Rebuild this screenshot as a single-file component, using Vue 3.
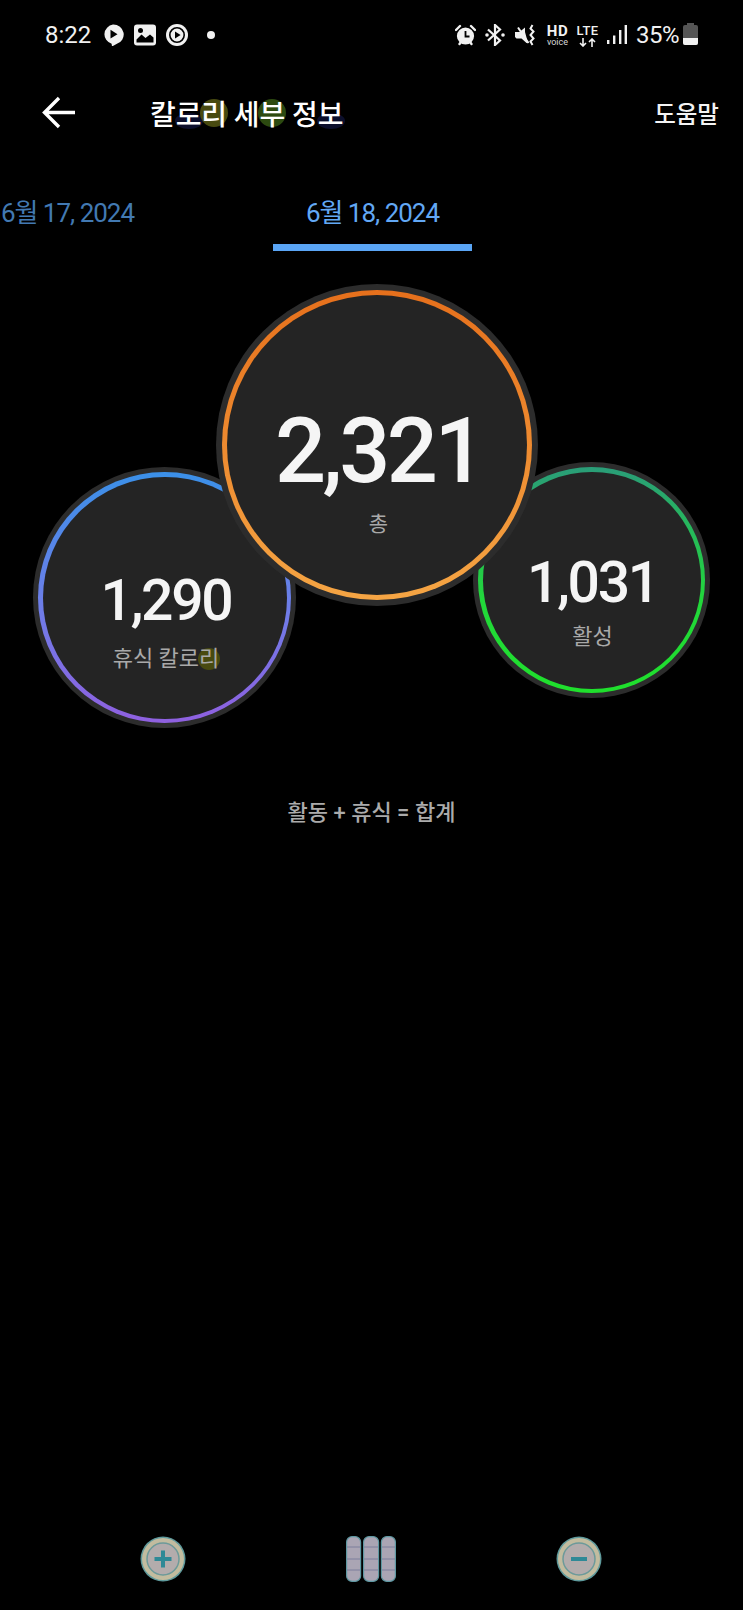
<script setup>
const bubbles = [
  { key: 'left', value: '1,290', label: '휴식 칼로', mark: '리' },
  { key: 'right', value: '1,031', label: '활성', mark: '' },
  { key: 'center', value: '2,321', label: '총', mark: '' }
]
</script>

<template>
  <div class="page">
    <div class="status">
      <span class="time">8:22</span>
      <svg class="ic" viewBox="0 0 22 22"><path d="M11 0.500a10.500 10 0 0 1 3.500 19.500L10 22.500l-.4-2.700A10.500 10 0 0 1 11 .5z" fill="#f1f1f1"/><path d="M8.500 5.800l7 4.400-7 4.400z" fill="#000"/></svg>
      <svg class="ic ic-pic" viewBox="0 0 22 22"><rect x="0" y="0.500" width="22" height="21" rx="3" fill="#f1f1f1"/><circle cx="6.500" cy="6.500" r="2.500" fill="#000"/><path d="M2.500 18.500v-3l5-5 4 3.500 4.500-3.500 3.500 3v5z" fill="#000"/></svg>
      <svg class="ic ic-rec" viewBox="0 0 22 22"><circle cx="11" cy="11" r="11" fill="#f1f1f1"/><circle cx="11" cy="11" r="7.200" fill="none" stroke="#000" stroke-width="1.600"/><path d="M9 7.500l5.600 3.500L9 14.500z" fill="#000"/></svg>
      <span class="dot"></span>
      <span class="status-gap"></span>
      <svg class="ic ic-alarm" viewBox="0 0 21 22"><circle cx="10.500" cy="12" r="8.600" fill="#f1f1f1"/><path d="M1 6l4-4M20 6l-4-4M4.500 20l1.500-2M16.500 20l-1.500-2" stroke="#f1f1f1" stroke-width="2.400" stroke-linecap="round"/><path d="M10.500 7v5.500h4" fill="none" stroke="#000" stroke-width="1.800"/></svg>
      <svg class="ic ic-bt" viewBox="0 0 20 22"><path d="M3 5.500l12 11L10 21V1l5 4.500L3 16.500" fill="none" stroke="#f1f1f1" stroke-width="2.200"/><circle cx="2" cy="11" r="1.800" fill="#f1f1f1"/><circle cx="18" cy="11" r="1.800" fill="#f1f1f1"/></svg>
      <svg class="ic ic-mute" viewBox="0 0 21 22"><path d="M0 8h4.500L10 3.500V8L13 19h-1.500L6.500 14.500H1.500L0 13z" fill="#f1f1f1"/><path d="M3 3.500l10.500 15.500" stroke="#f1f1f1" stroke-width="2"/><path d="M17.500 1l-2 3.500 3 3-3 3.500 3 3.500-3 3 2 3.500" fill="none" stroke="#f1f1f1" stroke-width="2"/></svg>
      <span class="hd"><b>HD</b><i>voice</i></span>
      <span class="lte"><b>LTE</b><svg viewBox="0 0 20 9" width="20" height="9"><path d="M5 0v8M2 5l3 3 3-3M14 9V1M11 4l3-3 3 3" fill="none" stroke="#f1f1f1" stroke-width="1.600"/></svg></span>
      <svg class="ic ic-sig" viewBox="0 0 20 22"><rect x="0" y="16" width="2.400" height="4" fill="#f1f1f1"/><rect x="6" y="11.500" width="2.400" height="8.500" fill="#f1f1f1"/><rect x="12" y="6" width="2.400" height="14" fill="#f1f1f1"/><rect x="17.600" y="1" width="2.400" height="19" fill="#f1f1f1"/></svg>
      <span class="pct">35%</span>
      <span class="batt"><span class="batt-fill"></span></span>
    </div>

    <header class="bar">
      <svg class="back" viewBox="0 0 34 34" width="34" height="34"><path d="M33 16.500H3M17 2L2.500 16.500 17 31" fill="none" stroke="#fff" stroke-width="3.400"/></svg>
      <h1 class="title">칼<span class="glow navy">로</span><span class="glow olive">리</span> 세<span class="glow green">부</span> 정<span class="glow navy">보</span></h1>
      <span class="help">도움말</span>
    </header>

    <nav class="tabs">
      <div class="tab">6월 17, 2024</div>
      <div class="tab active">6월 18, 2024</div>
    </nav>

    <section class="stage">
      <div v-for="b in bubbles" :key="b.key" class="bubble" :class="b.key">
        <div class="ring">
          <div class="face">
            <div class="num">{{ b.value }}</div>
            <div class="lab">{{ b.label }}<span v-if="b.mark" class="glow olive">{{ b.mark }}</span></div>
          </div>
        </div>
      </div>
    </section>

    <p class="formula">활동 + 휴식 = 합계</p>

    <footer class="tools">
      <svg class="tool" viewBox="0 0 46 46" width="46" height="46"><circle cx="23" cy="23" r="22.500" fill="#5f9a9c"/><circle cx="23" cy="23" r="21" fill="#c2bc9f"/><circle cx="23" cy="23" r="16" fill="#b3acac" stroke="#6c9a9a" stroke-width="1.500"/><path d="M23 14.500v17M14.500 23h17" stroke="#2f8996" stroke-width="4"/></svg>
      <svg class="tool" viewBox="0 0 50 46" width="50" height="46"><g fill="#aaa5b4" stroke="#5e98a2" stroke-width="1.200"><rect x="0.600" y="0.600" width="14" height="44.800" rx="5.500"/><rect x="17.600" y="0.600" width="15" height="44.800" rx="5.500"/><rect x="35.400" y="0.600" width="14" height="44.800" rx="5.500"/></g><path d="M1 11h13M18 11h14M36 11h13M1 23h13M18 23h14M36 23h13M1 34h13M18 34h14M36 34h13" stroke="#7d7f9c" stroke-width="1"/></svg>
      <svg class="tool" viewBox="0 0 46 46" width="46" height="46"><circle cx="23" cy="23" r="22.500" fill="#5f9a9c"/><circle cx="23" cy="23" r="21" fill="#c2bc9f"/><circle cx="23" cy="23" r="16" fill="#b3acac" stroke="#6c9a9a" stroke-width="1.500"/><path d="M15 23h16" stroke="#2f8996" stroke-width="4"/></svg>
    </footer>
  </div>
</template>

<style>
html, body { margin: 0; background: #000; }
</style>

<style scoped>
.page {
  width: 743px;
  height: 1610px;
  background: #000;
  display: flex;
  flex-direction: column;
  overflow: hidden;
  color: #f1f1f1;
  font-family: Roboto, "Noto Sans CJK KR", sans-serif;
}

.status {
  height: 70px;
  flex: none;
  display: flex;
  align-items: center;
  padding: 0 45px;
  box-sizing: border-box;
}
.time { font-size: 24px; width: 46px; margin-right: 11px; }
.ic { width: 22px; height: 22px; flex: none; }
.ic-pic, .ic-rec { margin-left: 10px; }
.dot { width: 8px; height: 8px; border-radius: 50%; background: #f1f1f1; margin-left: 19px; }
.status-gap { flex: 1; }
.ic-alarm { width: 21px; }
.ic-bt { width: 20px; margin-left: 9px; }
.ic-mute { width: 21px; margin-left: 10px; }
.hd { display: flex; flex-direction: column; align-items: center; margin-left: 10px; width: 23px; line-height: 1; }
.hd b { font-size: 15px; font-weight: 700; letter-spacing: 0.5px; line-height: 14px; }
.hd i { font-style: normal; font-size: 9px; line-height: 9px; color: #d8d8d8; }
.lte { display: flex; flex-direction: column; align-items: center; margin-left: 7px; width: 23px; }
.lte b { font-size: 13px; font-weight: 500; line-height: 13px; letter-spacing: 0.4px; }
.lte svg { margin-top: 1px; }
.ic-sig { width: 20px; margin-left: 8px; }
.pct { font-size: 24px; margin-left: 9px; letter-spacing: -0.5px; width: 44px; }
.batt {
  width: 15px;
  height: 20px;
  margin-left: 3px;
  background: #555;
  border-radius: 2px;
  display: flex;
  align-items: flex-end;
  position: relative;
}
.batt::before {
  content: "";
  position: absolute;
  top: -2px;
  left: 4px;
  width: 7px;
  height: 2px;
  background: #555;
}
.batt-fill { width: 100%; height: 7px; background: #f1f1f1; border-radius: 0 0 2px 2px; }

.bar {
  height: 86px;
  flex: none;
  display: flex;
  align-items: center;
  padding: 0 24px 0 42px;
  box-sizing: border-box;
}
.title {
  margin: 0 0 0 74px;
  flex: 1;
  font-size: 28px;
  font-weight: 500;
  color: #fff;
  letter-spacing: -0.1px;
  white-space: nowrap;
}
.help { font-size: 23.500px; font-weight: 500; color: #f4f4f4; }
.glow { display: inline-block; position: relative; z-index: 0; }
.glow::before {
  content: "";
  position: absolute;
  z-index: -1;
  left: 50%;
  top: 50%;
  width: 1em;
  height: 1em;
  margin: -0.5em 0 0 -0.5em;
  border-radius: 50%;
}
.olive::before { background: #484a10; }
.green::before { background: #2c4a10; }
.navy::before { background: #0c0f2c; height: 16px; margin-top: 0; }

.tabs {
  height: 95px;
  flex: none;
  display: flex;
  margin-left: -32px;
  gap: 106px;
}
.tab {
  width: 199px;
  box-sizing: border-box;
  text-align: center;
  font-size: 26px;
  line-height: 114px;
  height: 95px;
  color: #4279b2;
  letter-spacing: -1px;
  white-space: nowrap;
}
.active {
  color: #62a8f5;
  border-bottom: 7px solid #5aa5f5;
}

.stage { position: relative; height: 500px; flex: none; }
.bubble {
  position: absolute;
  border-radius: 50%;
  background: #2c2c2c;
  padding: 5px;
  box-sizing: border-box;
}
.ring { width: 100%; height: 100%; border-radius: 50%; padding: 4.500px; box-sizing: border-box; }
.face {
  width: 100%;
  height: 100%;
  border-radius: 50%;
  background: #242424;
  display: flex;
  flex-direction: column;
  align-items: center;
  justify-content: center;
  box-sizing: border-box;
}
.num { font-weight: 500; line-height: 1; color: #f5f5f5; white-space: nowrap; }
.lab { font-size: 22px; line-height: 30px; color: #a9a9a9; white-space: nowrap; }

.center { left: 216px; top: 33px; width: 322px; height: 322px; z-index: 2; padding: 6px; }
.center .ring { background: linear-gradient(#e6701c, #f5a544); padding: 5px; }
.center .face { padding-left: 3px; }
.center .num { font-size: 90px; letter-spacing: -3.500px; margin-top: 55px; }
.center .lab { font-size: 21px; margin-top: 12px; }

.left { left: 33px; top: 216px; width: 263px; height: 261px; z-index: 1; }
.left .ring { background: linear-gradient(#3b90e8, #6f7de8 55%, #8f60e0); }
.left .face { padding-left: 3px; }
.left .num { font-size: 57px; letter-spacing: -2.300px; margin-top: 51px; }
.left .lab { margin-top: 15px; }

.right { left: 473px; top: 211px; width: 237px; height: 236px; z-index: 1; }
.right .ring { background: linear-gradient(#2a9d78, #22d83a 60%, #1fe02c); }
.right .face { padding-left: 2px; }
.right .num { font-size: 57px; letter-spacing: -2.300px; margin-top: 46px; }
.right .lab { margin-top: 11px; }

.formula {
  margin: 47px 0 0;
  height: 30px;
  line-height: 30px;
  text-align: center;
  font-size: 22px;
  font-weight: 500;
  color: #ababab;
  flex: none;
}

.tools {
  margin-top: auto;
  height: 102px;
  flex: none;
  box-sizing: border-box;
  display: flex;
  align-items: center;
  justify-content: space-between;
  padding: 0 141px 0 140px;
}
.tool { flex: none; }
</style>
